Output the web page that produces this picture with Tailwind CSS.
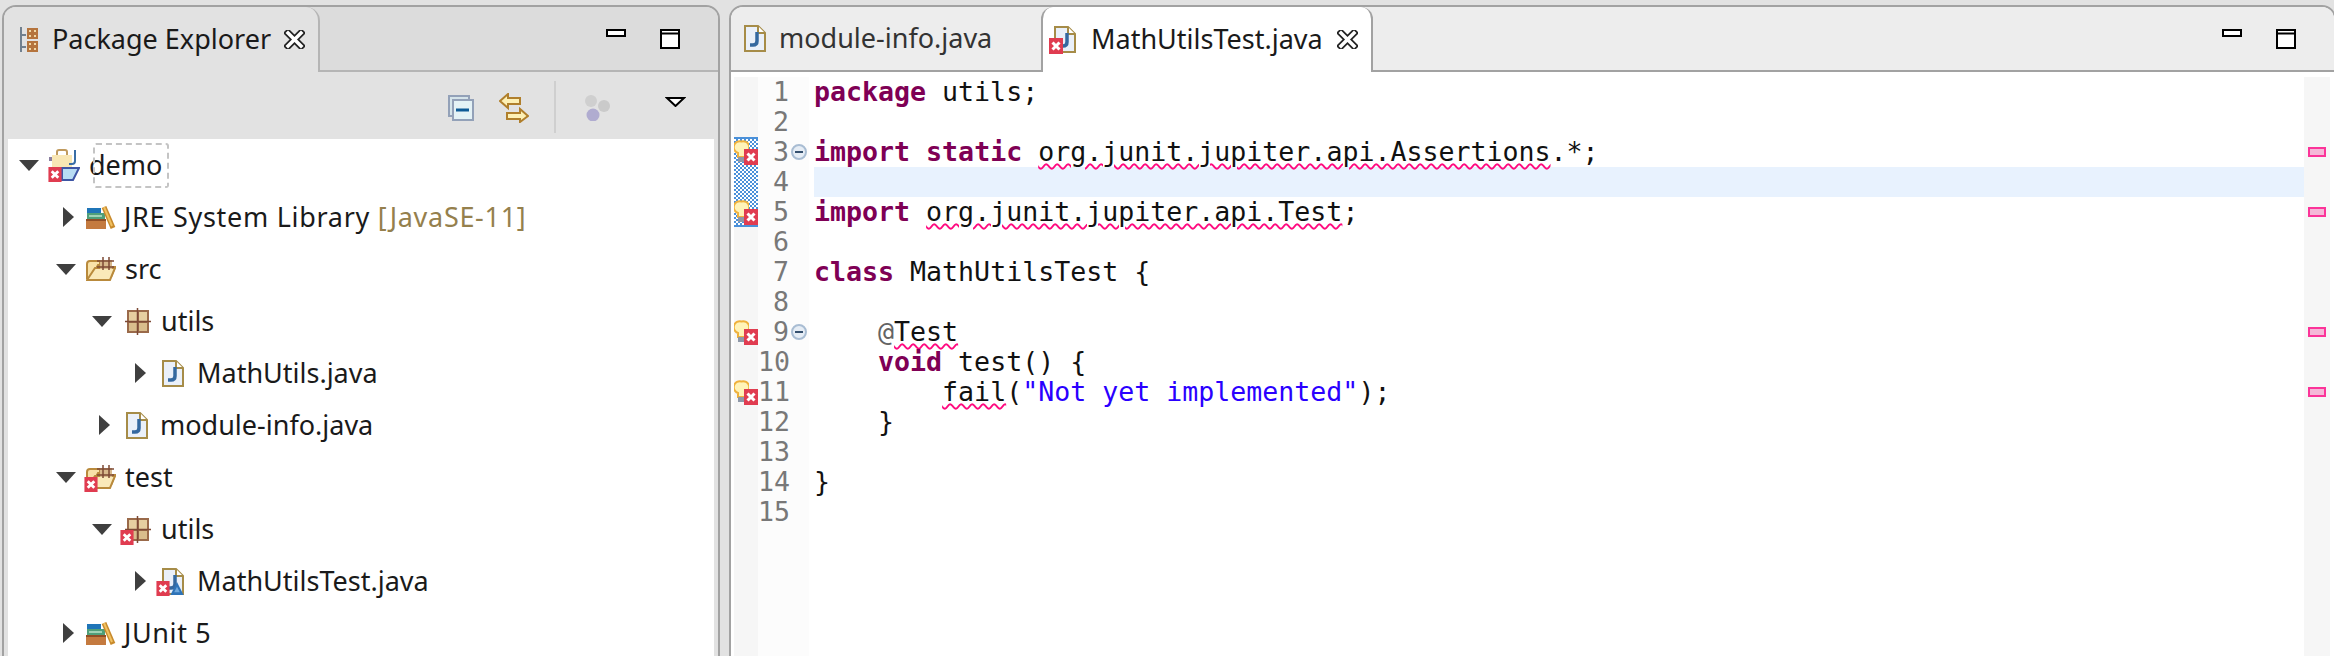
<!DOCTYPE html>
<html lang="en">
<head>
    <meta charset="UTF-8">
    <title>Eclipse - MathUtilsTest.java</title>
    <script src="https://cdn.jsdelivr.net/npm/@tailwindcss/browser@4"></script>
</head>
<body class="bg-[#e2e2e2] overflow-hidden">
    <!-- shared icons -->
    <svg width="0" height="0" class="absolute">
        <defs>
            <symbol id="arrow-down" viewBox="0 0 20 11"><path d="M0 0H20L10 11Z" fill="#3f3f3f"/></symbol>
            <symbol id="arrow-right" viewBox="0 0 11 20"><path d="M0 0V20L11 10Z" fill="#3f3f3f"/></symbol>
            <symbol id="badge" viewBox="0 0 14 16"><rect width="14" height="16" fill="#e03c50"/><path d="M3.5 4.5L10.5 11.5M10.5 4.5L3.5 11.5" stroke="#fff" stroke-width="3"/></symbol>
            <symbol id="java" viewBox="0 0 22 27"><path d="M1 1H14L21 8V26H1Z" fill="#eaf0f9" stroke="#a68c48" stroke-width="2"/><path d="M14 1V8H21" fill="#fff" stroke="#a68c48" stroke-width="2"/><path d="M13 7V16Q13 20 9 20H6" fill="none" stroke="#34689f" stroke-width="3.5"/></symbol>
            <symbol id="package" viewBox="0 0 26 27"><rect x="2" y="2" width="22" height="23" fill="#9a6a4a"/><rect x="4" y="4" width="8" height="9" fill="#e6cfa0"/><rect x="14" y="4" width="8" height="9" fill="#e6cfa0"/><rect x="4" y="15" width="8" height="8" fill="#d9bd8c"/><rect x="14" y="15" width="8" height="8" fill="#d9bd8c"/><path d="M12.5 0V27M0 13.5H26" stroke="#7d4a35" stroke-width="1.5"/></symbol>
            <symbol id="source" viewBox="0 0 30 24"><path d="M1 22V7Q1 4 4 4H14V8H12L6 20H25L29 10H10" fill="#f8e2a8" stroke="#b98a3c" stroke-width="2"/><path d="M1 23H24L29 11H9Z" fill="#fae9b9" stroke="#b98a3c" stroke-width="2"/><rect x="14" y="3" width="12" height="9" fill="#d8b98c"/><path d="M17 0V13M23 0V13M11 4H28M11 10H28" stroke="#7d4a35" stroke-width="1.5"/></symbol>
            <symbol id="library" viewBox="0 0 30 24"><rect x="0" y="14" width="20" height="10" fill="#c47a3f"/><rect x="0" y="14" width="20" height="2" fill="#8f4e26"/><rect x="1" y="8" width="18" height="6" fill="#4f9f7a"/><rect x="3" y="10" width="13" height="2" fill="#9fd3b5"/><rect x="1" y="3" width="14" height="5" fill="#1f75b8"/><path d="M18 2L27 23" stroke="#c88a2c" stroke-width="5"/><path d="M18 2L26 21" stroke="#f0c060" stroke-width="2"/></symbol>
            <symbol id="project" viewBox="0 0 32 33"><path d="M9 8V3Q9 1 11 1H17Q19 1 19 3V8" fill="none" stroke="#c09a5e" stroke-width="2"/><rect x="1" y="8" width="6" height="4" fill="#8a7fa0"/><rect x="4" y="6" width="20" height="14" fill="#f8e6b4"/><path d="M14 19H31L25 31H14Z" fill="#b8dcf4" stroke="#3e55a5" stroke-width="2"/><path d="M27 1V12Q27 15 24 15H21" fill="none" stroke="#3a6ea5" stroke-width="2"/></symbol>
            <symbol id="test-mark" viewBox="0 0 16 16"><path d="M8 1L15 15H1Z" fill="#2e73b8"/><path d="M8 6L11 12H5Z" fill="#6fa8dc"/></symbol>
            <symbol id="explorer" viewBox="0 0 18 25"><path d="M1 0V25M1 8H6M1 20H6" stroke="#71808f" stroke-width="2"/><rect x="7" y="1" width="11" height="11" fill="#b5743d"/><rect x="7" y="14" width="11" height="11" fill="#b5743d"/><path d="M9 3H11V5H9ZM14 3H16V5H14ZM9 8H11V10H9ZM14 8H16V10H14ZM9 16H11V18H9ZM14 16H16V18H14ZM9 21H11V23H9ZM14 21H16V23H14Z" fill="#f2d9a6"/></symbol>
            <symbol id="close" viewBox="0 0 21 19"><path d="M4 3L17 16M17 3L4 16" stroke="#222" stroke-width="7" stroke-linecap="square"/><path d="M4 3L17 16M17 3L4 16" stroke="#fff" stroke-width="3.500" stroke-linecap="square"/></symbol>
            <symbol id="bulb" viewBox="0 0 15 24"><path d="M7.500 1.500A6 6 0 0 1 11 13V17H4V13A6 6 0 0 1 7.500 1.500Z" fill="#fff3b8" stroke="#efb13c" stroke-width="2"/><rect x="4" y="17" width="7" height="5" fill="#8e98a8"/></symbol>
            <symbol id="fold" viewBox="0 0 16 16"><circle cx="8" cy="8" r="7" fill="#e6edf5" stroke="#a9bdd3" stroke-width="2"/><path d="M4 8H12" stroke="#35506e" stroke-width="2"/></symbol>
            <symbol id="minimize" viewBox="0 0 20 8"><rect x="1" y="1" width="18" height="6" fill="#fff" stroke="#000" stroke-width="2"/></symbol>
            <symbol id="maximize" viewBox="0 0 20 20"><rect x="1" y="1" width="18" height="18" fill="#fff" stroke="#000" stroke-width="2"/><path d="M1 4.500H19" stroke="#000" stroke-width="2"/></symbol>
        </defs>
    </svg>

    <div class="w-[2334px] h-[656px] overflow-hidden flex pt-[5px] text-[#1a1a1a] font-['Noto_Sans',sans-serif] text-[27px]">

        <!-- package explorer -->
        <section class="ml-[2px] w-[718px] h-[700px] shrink-0 border-2 border-[#a2a2a2] rounded-t-[14px] bg-[#e2e2e2] overflow-hidden">
            <div class="flex h-[65px] bg-[#dcdcdc]">
                <div class="w-[316px] h-[65px] bg-[#e2e2e2] border-r-2 border-[#b5b5b5] rounded-tr-[14px] flex items-center pl-[16px]">
                    <svg class="w-[18px] h-[25px] mr-[14px]"><use href="#explorer"/></svg>
                    <span>Package Explorer</span>
                    <svg class="w-[21px] h-[19px] ml-[13px]"><use href="#close"/></svg>
                </div>
                <div class="flex-1 border-b-2 border-[#b5b5b5] flex items-start pt-[22px] pl-[286px] gap-[34px]">
                    <svg class="w-[20px] h-[8px]"><use href="#minimize"/></svg>
                    <svg class="w-[20px] h-[20px]"><use href="#maximize"/></svg>
                </div>
            </div>
            <div class="h-[67px] flex items-start pl-[444px]">
                <svg class="w-[26px] h-[26px] mt-[23px]" viewBox="0 0 26 26"><rect x="1" y="1" width="20" height="20" fill="#d5e4ea" stroke="#93a1b8" stroke-width="2"/><rect x="5" y="5" width="20" height="20" fill="#e4f2f5" stroke="#93a1b8" stroke-width="2"/><path d="M8 15H21" stroke="#0d5a95" stroke-width="3"/></svg>
                <svg class="w-[30px] h-[30px] mt-[21px] ml-[25px]" viewBox="0 0 30 30"><path d="M1 8L9 1V5H21V11H9V15Z" fill="#fdf0b5" stroke="#b07f2c" stroke-width="2"/><path d="M29 23L21 16V20H8V26H21V29Z" fill="#fdf0b5" stroke="#b07f2c" stroke-width="2"/></svg>
                <div class="w-[2px] h-[52px] bg-[#cfcfcf] mt-[9px] ml-[25px]"></div>
                <svg class="w-[26px] h-[26px] mt-[23px] ml-[28px]" viewBox="0 0 26 26"><circle cx="7" cy="6" r="6" fill="#cfcfcf"/><circle cx="20" cy="11" r="6" fill="#cacaca"/><circle cx="9" cy="20" r="6.500" fill="#b0acd0"/></svg>
                <svg class="w-[21px] h-[10px] mt-[25px] ml-[55px]" viewBox="0 0 21 10"><path d="M2 1H19L10.500 9Z" fill="#fff" stroke="#000" stroke-width="2"/></svg>
            </div>

            <div class="mx-[4px] bg-white h-[600px]">
                <div class="flex items-center h-[52px] pl-[10px]">
                    <span class="w-[22px] flex justify-center"><svg class="w-[20px] h-[11px]"><use href="#arrow-down"/></svg></span>
                    <span class="w-[49px] pl-[8px] relative flex">
                        <svg class="w-[32px] h-[33px]"><use href="#project"/></svg>
                        <svg class="absolute left-[8px] bottom-0 w-[14px] h-[15px]"><use href="#badge"/></svg>
                    </span>
                    <span class="relative">demo<span class="absolute left-[4px] -right-[7px] top-[-2px] bottom-[-3px] border-2 border-dashed border-[#c4c4c4] rounded-[3px]"></span></span>
                </div>
                <div class="flex items-center h-[52px] pl-[52px]">
                    <span class="w-[16px] flex justify-center"><svg class="w-[11px] h-[20px]"><use href="#arrow-right"/></svg></span>
                    <span class="w-[48px] pl-[10px] flex"><svg class="w-[30px] h-[24px]"><use href="#library"/></svg></span>
                    <span class="tracking-[0.7px]">JRE System Library <span class="text-[#95804d]">[JavaSE-11]</span></span>
                </div>
                <div class="flex items-center h-[52px] pl-[47px]">
                    <span class="w-[22px] flex justify-center"><svg class="w-[20px] h-[11px]"><use href="#arrow-down"/></svg></span>
                    <span class="w-[48px] pl-[9px] flex"><svg class="w-[30px] h-[24px]"><use href="#source"/></svg></span>
                    <span>src</span>
                </div>
                <div class="flex items-center h-[52px] pl-[83px]">
                    <span class="w-[22px] flex justify-center"><svg class="w-[20px] h-[11px]"><use href="#arrow-down"/></svg></span>
                    <span class="w-[48px] pl-[12px] flex"><svg class="w-[26px] h-[27px]"><use href="#package"/></svg></span>
                    <span>utils</span>
                </div>
                <div class="flex items-center h-[52px] pl-[124px]">
                    <span class="w-[16px] flex justify-center"><svg class="w-[11px] h-[20px]"><use href="#arrow-right"/></svg></span>
                    <span class="w-[49px] pl-[14px] flex"><svg class="w-[22px] h-[27px]"><use href="#java"/></svg></span>
                    <span>MathUtils.java</span>
                </div>
                <div class="flex items-center h-[52px] pl-[88px]">
                    <span class="w-[16px] flex justify-center"><svg class="w-[11px] h-[20px]"><use href="#arrow-right"/></svg></span>
                    <span class="w-[48px] pl-[14px] flex"><svg class="w-[22px] h-[27px]"><use href="#java"/></svg></span>
                    <span>module-info.java</span>
                </div>
                <div class="flex items-center h-[52px] pl-[47px]">
                    <span class="w-[22px] flex justify-center"><svg class="w-[20px] h-[11px]"><use href="#arrow-down"/></svg></span>
                    <span class="w-[48px] pl-[9px] relative flex">
                        <svg class="w-[30px] h-[24px]"><use href="#source"/></svg>
                        <svg class="absolute left-[7px] -bottom-[3px] w-[14px] h-[15px]"><use href="#badge"/></svg>
                    </span>
                    <span>test</span>
                </div>
                <div class="flex items-center h-[52px] pl-[83px]">
                    <span class="w-[22px] flex justify-center"><svg class="w-[20px] h-[11px]"><use href="#arrow-down"/></svg></span>
                    <span class="w-[48px] pl-[12px] relative flex">
                        <svg class="w-[26px] h-[27px]"><use href="#package"/></svg>
                        <svg class="absolute left-[7px] bottom-[-2px] w-[14px] h-[15px]"><use href="#badge"/></svg>
                    </span>
                    <span>utils</span>
                </div>
                <div class="flex items-center h-[52px] pl-[124px]">
                    <span class="w-[16px] flex justify-center"><svg class="w-[11px] h-[20px]"><use href="#arrow-right"/></svg></span>
                    <span class="w-[49px] pl-[14px] relative flex">
                        <svg class="w-[22px] h-[27px]"><use href="#java"/></svg>
                        <svg class="absolute left-[8px] bottom-[-1px] w-[14px] h-[15px]"><use href="#badge"/></svg>
                        <svg class="absolute left-[21px] bottom-[-1px] w-[16px] h-[15px]"><use href="#test-mark"/></svg>
                    </span>
                    <span>MathUtilsTest.java</span>
                </div>
                <div class="flex items-center h-[52px] pl-[52px]">
                    <span class="w-[16px] flex justify-center"><svg class="w-[11px] h-[20px]"><use href="#arrow-right"/></svg></span>
                    <span class="w-[48px] pl-[10px] flex"><svg class="w-[30px] h-[24px]"><use href="#library"/></svg></span>
                    <span class="tracking-[0.6px]">JUnit 5</span>
                </div>
            </div>
        </section>

        <!-- editor -->
        <section class="ml-[9px] w-[1607px] h-[700px] shrink-0 border-2 border-[#a2a2a2] rounded-t-[14px] bg-white overflow-hidden">
            <div class="flex h-[65px] bg-[#ededed]">
                <div class="w-[310px] border-b-2 border-[#a2a2a2] flex items-center pl-[13px] text-[#333]">
                    <svg class="w-[22px] h-[27px] mr-[13px]"><use href="#java"/></svg>
                    <span>module-info.java</span>
                </div>
                <div class="w-[332px] bg-white border-x-2 border-[#a2a2a2] rounded-t-[12px] flex items-center pl-[11px]">
                    <span class="relative flex w-[24px] mr-[13px]">
                        <svg class="w-[22px] h-[27px]"><use href="#java"/></svg>
                        <svg class="absolute left-[-5px] top-[12px] w-[14px] h-[16px]"><use href="#badge"/></svg>
                    </span>
                    <span>MathUtilsTest.java</span>
                    <svg class="w-[21px] h-[19px] ml-[14px]"><use href="#close"/></svg>
                </div>
                <div class="flex-1 border-b-2 border-[#a2a2a2] flex items-start pt-[22px] pl-[849px] gap-[34px]">
                    <svg class="w-[20px] h-[8px]"><use href="#minimize"/></svg>
                    <svg class="w-[20px] h-[20px]"><use href="#maximize"/></svg>
                </div>
            </div>

            <div class="flex pt-[5px] pl-[3px] h-[600px] font-['DejaVu_Sans_Mono',monospace] text-[26.6px] leading-[30px]">
                <!-- annotation ruler -->
                <div class="w-[24px] bg-[#f6f6f6]">
                    <div class="h-[60px]"></div>
                    <div class="h-[90px] border-y-2 border-[#4a90d9] bg-[repeating-conic-gradient(#4a90d9_0_25%,#fff_0_50%)] bg-size-[4px_4px] relative">
                        <svg class="absolute left-0 top-[1px] w-[15px] h-[24px]"><use href="#bulb"/></svg>
                        <svg class="absolute left-[10px] top-[10px] w-[14px] h-[16px]"><use href="#badge"/></svg>
                        <svg class="absolute left-0 top-[61px] w-[15px] h-[24px]"><use href="#bulb"/></svg>
                        <svg class="absolute left-[10px] top-[70px] w-[14px] h-[16px]"><use href="#badge"/></svg>
                    </div>
                    <div class="h-[90px]"></div>
                    <div class="h-[30px] relative">
                        <svg class="absolute left-0 top-[3px] w-[15px] h-[24px]"><use href="#bulb"/></svg>
                        <svg class="absolute left-[10px] top-[12px] w-[14px] h-[16px]"><use href="#badge"/></svg>
                    </div>
                    <div class="h-[30px]"></div>
                    <div class="h-[30px] relative">
                        <svg class="absolute left-0 top-[3px] w-[15px] h-[24px]"><use href="#bulb"/></svg>
                        <svg class="absolute left-[10px] top-[12px] w-[14px] h-[16px]"><use href="#badge"/></svg>
                    </div>
                </div>

                <!-- line numbers -->
                <div class="w-[51px] bg-[#fcfcfc] text-right text-[#787878] pr-[20px]">
                    <div>1</div>
                    <div>2</div>
                    <div class="relative">3<svg class="absolute -right-[18px] top-[7px] w-[16px] h-[16px]"><use href="#fold"/></svg></div>
                    <div>4</div>
                    <div>5</div>
                    <div>6</div>
                    <div>7</div>
                    <div>8</div>
                    <div class="relative">9<svg class="absolute -right-[18px] top-[7px] w-[16px] h-[16px]"><use href="#fold"/></svg></div>
                    <div>10</div>
                    <div>11</div>
                    <div>12</div>
                    <div>13</div>
                    <div>14</div>
                    <div>15</div>
                </div>

                <!-- source -->
                <div class="flex-1 ml-[5px] text-[#111]">
                    <div class="h-[30px] whitespace-pre"><b class="text-[#7f0055]">package</b> utils;</div>
                    <div class="h-[30px]"></div>
                    <div class="h-[30px] whitespace-pre"><b class="text-[#7f0055]">import</b> <b class="text-[#7f0055]">static</b> <span class="underline decoration-wavy decoration-[#ff0a80] decoration-[1.5px] underline-offset-[2px]">org.junit.jupiter.api.Assertions</span>.*;</div>
                    <div class="h-[30px] bg-[#e8f2fe]"></div>
                    <div class="h-[30px] whitespace-pre"><b class="text-[#7f0055]">import</b> <span class="underline decoration-wavy decoration-[#ff0a80] decoration-[1.5px] underline-offset-[2px]">org.junit.jupiter.api.Test</span>;</div>
                    <div class="h-[30px]"></div>
                    <div class="h-[30px] whitespace-pre"><b class="text-[#7f0055]">class</b> MathUtilsTest {</div>
                    <div class="h-[30px]"></div>
                    <div class="h-[30px] whitespace-pre">    <span class="text-[#646464]">@</span><span class="underline decoration-wavy decoration-[#ff0a80] decoration-[1.5px] underline-offset-[2px]">Test</span></div>
                    <div class="h-[30px] whitespace-pre">    <b class="text-[#7f0055]">void</b> test() {</div>
                    <div class="h-[30px] whitespace-pre">        <span class="underline decoration-wavy decoration-[#ff0a80] decoration-[1.5px] underline-offset-[2px]">fail</span>(<span class="text-[#2a00ff]">"Not yet implemented"</span>);</div>
                    <div class="h-[30px] whitespace-pre">    }</div>
                    <div class="h-[30px]"></div>
                    <div class="h-[30px] whitespace-pre">}</div>
                </div>

                <!-- overview ruler -->
                <div class="w-[26px] mr-[4px] bg-[#f6f6f6] flex flex-col items-center pt-[70px]">
                    <div class="w-[18px] h-[10px] bg-[#f5b8d8] border-2 border-[#fb3499]"></div>
                    <div class="w-[18px] h-[10px] bg-[#f5b8d8] border-2 border-[#fb3499] mt-[50px]"></div>
                    <div class="w-[18px] h-[10px] bg-[#f5b8d8] border-2 border-[#fb3499] mt-[110px]"></div>
                    <div class="w-[18px] h-[10px] bg-[#f5b8d8] border-2 border-[#fb3499] mt-[50px]"></div>
                </div>
            </div>
        </section>
    </div>
</body>
</html>
